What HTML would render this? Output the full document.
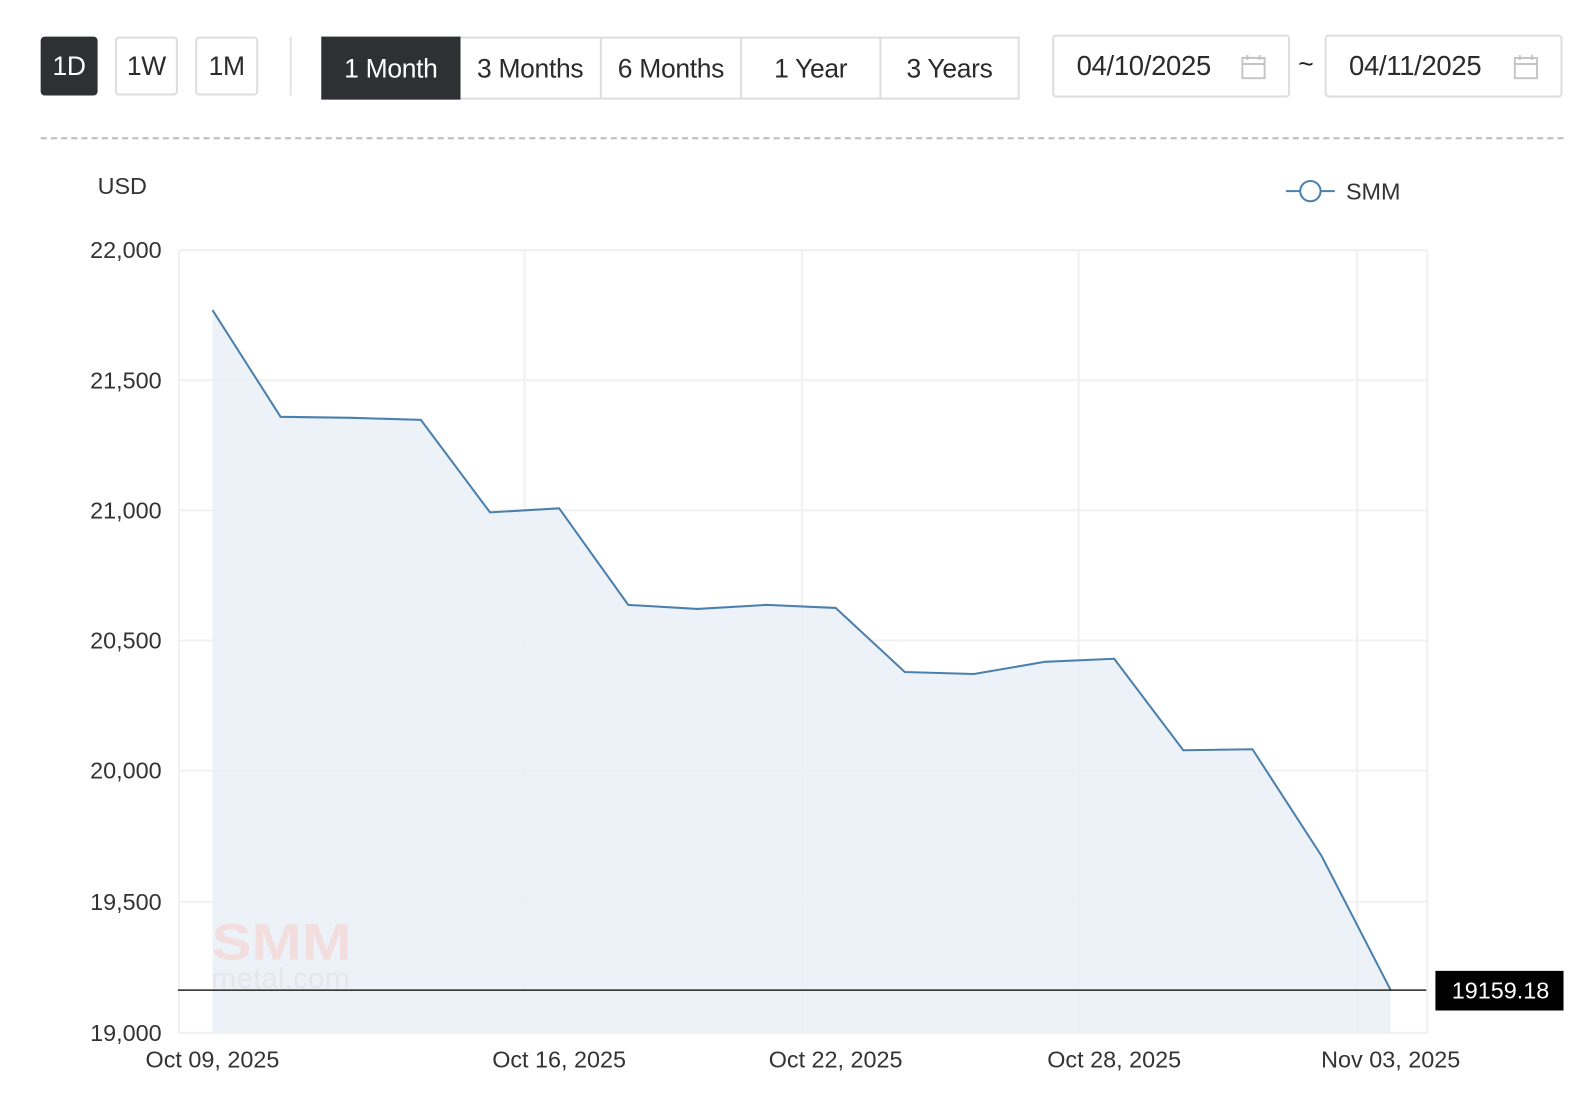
<!DOCTYPE html>
<html><head><meta charset="utf-8"><style>
html,body{margin:0;padding:0;background:#fff;width:1594px;height:1112px;overflow:hidden}
#w{position:absolute;left:0;top:0;width:1568px;height:1094px;transform:scale(1.0166);transform-origin:0 0;font-family:"Liberation Sans",Arial,sans-serif;color:#222}
.b{position:absolute;box-sizing:border-box;display:flex;align-items:center;justify-content:center;font-size:26px;color:#2b2b2b;letter-spacing:-0.3px}
.sm{border:2px solid #ddd;border-radius:4px;top:36px;height:58px}
.dk{background:#2f3033;color:#fff;border-color:#2f3033}
.seg{top:36px;height:62px;border:2px solid #ddd;border-left:none}
.dt{top:34px;height:62px;border:2px solid #ddd;border-radius:4px;justify-content:flex-start;padding-left:22px;font-size:27px}
.cal{position:absolute;right:22px;top:18px}
</style></head><body><div id="w">
<div class="b sm dk" style="left:40px;width:56px">1D</div>
<div class="b sm" style="left:113px;width:62px">1W</div>
<div class="b sm" style="left:192px;width:62px">1M</div>
<div style="position:absolute;left:285px;top:36px;width:2px;height:58px;background:#e2e2e2"></div>
<div class="b seg dk" style="left:316px;width:137px;border:none">1 Month</div>
<div class="b seg" style="left:453px;width:139px">3 Months</div>
<div class="b seg" style="left:592px;width:138px">6 Months</div>
<div class="b seg" style="left:730px;width:137px">1 Year</div>
<div class="b seg" style="left:867px;width:136px">3 Years</div>
<div class="b dt" style="left:1035px;width:234px">04/10/2025<svg class="cal" width="24" height="24" viewBox="0 0 24 24" fill="none" stroke="#c4c4c4" stroke-width="2"><rect x="1" y="3" width="22" height="20"/><line x1="1" y1="9" x2="23" y2="9"/><line x1="6" y1="0" x2="6" y2="5"/><line x1="18" y1="0" x2="18" y2="5"/></svg></div>
<div style="position:absolute;left:1277px;top:48px;font-size:26px">~</div>
<div class="b dt" style="left:1303px;width:234px">04/11/2025<svg class="cal" width="24" height="24" viewBox="0 0 24 24" fill="none" stroke="#c4c4c4" stroke-width="2"><rect x="1" y="3" width="22" height="20"/><line x1="1" y1="9" x2="23" y2="9"/><line x1="6" y1="0" x2="6" y2="5"/><line x1="18" y1="0" x2="18" y2="5"/></svg></div>
<div style="position:absolute;left:40px;top:135px;width:1498px;border-top:2px dashed #bbb"></div>
<svg style="position:absolute;left:0;top:0" width="1568" height="1094" font-family="Liberation Sans,Arial,sans-serif">
<text x="96" y="191" font-size="23" fill="#333">USD</text>
<line x1="1265" y1="188" x2="1313" y2="188" stroke="#4a7fae" stroke-width="2"/>
<circle cx="1289" cy="188" r="10" fill="#fff" stroke="#4a7fae" stroke-width="2"/>
<text x="1324" y="196" font-size="23" fill="#333">SMM</text>
<g stroke="#f0f0f0" stroke-width="2" fill="none">
<line x1="176" y1="246" x2="1404" y2="246"/><line x1="176" y1="374" x2="1404" y2="374"/><line x1="176" y1="502" x2="1404" y2="502"/><line x1="176" y1="630" x2="1404" y2="630"/><line x1="176" y1="758" x2="1404" y2="758"/><line x1="176" y1="887" x2="1404" y2="887"/><line x1="176" y1="1016" x2="1404" y2="1016"/>
<line x1="176" y1="246" x2="176" y2="1016"/><line x1="516" y1="246" x2="516" y2="1016"/><line x1="789" y1="246" x2="789" y2="1016"/><line x1="1061" y1="246" x2="1061" y2="1016"/><line x1="1335" y1="246" x2="1335" y2="1016"/><line x1="1404" y1="246" x2="1404" y2="1016"/>
</g>
<g font-size="23" fill="#333" text-anchor="end">
<text x="159" y="254">22,000</text><text x="159" y="382">21,500</text><text x="159" y="510">21,000</text><text x="159" y="638">20,500</text><text x="159" y="766">20,000</text><text x="159" y="895">19,500</text><text x="159" y="1024">19,000</text>
</g>
<g font-size="23" fill="#333" text-anchor="middle">
<text x="209" y="1050">Oct 09, 2025</text><text x="550" y="1050">Oct 16, 2025</text><text x="822" y="1050">Oct 22, 2025</text><text x="1096" y="1050">Oct 28, 2025</text><text x="1368" y="1050">Nov 03, 2025</text>
</g>
<path d="M209,305 L276,410 L346,411 L414,413 L482,504 L550,500 L618,595 L686,599 L754,595 L822,598 L890,661 L958,663 L1028,651 L1096,648 L1164,738 L1232,737 L1300,842 L1368,974 L1368,1016 L209,1016Z" fill="#e9f0f6" fill-opacity="0.85"/>
<text x="208" y="944" font-size="50" font-weight="bold" fill="#f2dede" textLength="138" lengthAdjust="spacingAndGlyphs">SMM</text>
<text x="208" y="972" font-size="28" fill="#e4e8ed" textLength="136" lengthAdjust="spacingAndGlyphs">metal.com</text>
<path d="M209,305 L276,410 L346,411 L414,413 L482,504 L550,500 L618,595 L686,599 L754,595 L822,598 L890,661 L958,663 L1028,651 L1096,648 L1164,738 L1232,737 L1300,842 L1368,974" fill="none" stroke="#4a7fae" stroke-width="2"/>
<line x1="175" y1="974" x2="1403" y2="974" stroke="#222" stroke-width="1.5"/>
<rect x="1412" y="955" width="126" height="39" fill="#000"/>
<text x="1476" y="982" font-size="23" fill="#fff" text-anchor="middle">19159.18</text>
</svg>
</div></body></html>
